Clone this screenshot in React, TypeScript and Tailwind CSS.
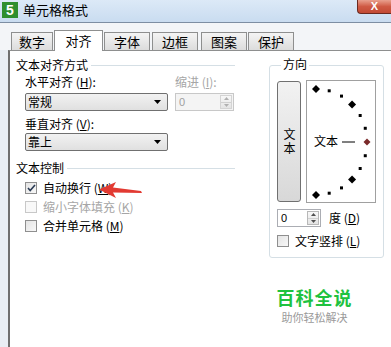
import React from "react";

const font = { fontFamily: '"Noto Sans CJK SC", "Liberation Sans", sans-serif' };

function Tab({ label, active, w, ml }: { label: string; active?: boolean; w: string; ml: string }) {
  if (active) {
    return (
      <div className={`${w} ${ml} h-[21px] -mb-px z-10 flex items-center justify-center border border-b-0 border-[#8e8f8f] bg-white text-[13px] text-black`}>
        {label}
      </div>
    );
  }
  return (
    <div className={`${w} ${ml} h-[18px] flex items-center justify-center border border-b-0 border-[#8e8f8f] bg-gradient-to-b from-[#f4f4f4] to-[#dcdcdc] text-[13px] text-black`}>
      {label}
    </div>
  );
}

function GroupTitle({ text }: { text: string }) {
  return (
    <div className="flex items-center h-[14px]">
      <span className="text-[12px] leading-none text-black">{text}</span>
      <div className="flex-1 ml-[3px] h-px bg-[#d5dfe5]" />
    </div>
  );
}

function Select({ value }: { value: string }) {
  return (
    <div className="w-[143px] h-[18px] flex items-center justify-between rounded-[2px] border border-[#707070] bg-gradient-to-b from-[#f2f2f2] to-[#e0e0e0] pl-[2px] pr-[6px]">
      <span className="text-[12px] leading-none text-black">{value}</span>
      <svg width="7" height="4" viewBox="0 0 7 4">
        <path d="M0 0h7L3.5 4z" fill="#000" />
      </svg>
    </div>
  );
}

function Spin({ disabled, w }: { disabled?: boolean; w: string }) {
  return (
    <div className={`${w} h-[18px] flex items-center justify-between border ${disabled ? "border-[#c8c8c8] bg-[#f4f4f4]" : "border-[#abadb3] bg-white"} pl-[3px] pr-px`}>
      <span className={`text-[11px] leading-none ${disabled ? "text-[#a0a0a0]" : "text-black"}`} style={{ fontFamily: '"Liberation Sans", sans-serif' }}>0</span>
      <div className={`w-[12px] h-[14px] flex flex-col border ${disabled ? "border-[#d4d4d4]" : "border-[#b8b8b8]"} bg-gradient-to-b from-[#f8f8f8] to-[#e4e4e4]`}>
        <div className="flex-1 flex items-center justify-center border-b border-[#d0d0d0]">
          <svg width="5" height="3" viewBox="0 0 5 3"><path d="M2.5 0L5 3H0z" fill={disabled ? "#b0b0b0" : "#505050"} /></svg>
        </div>
        <div className="flex-1 flex items-center justify-center">
          <svg width="5" height="3" viewBox="0 0 5 3"><path d="M0 0h5L2.5 3z" fill={disabled ? "#b0b0b0" : "#505050"} /></svg>
        </div>
      </div>
    </div>
  );
}

function Check({ checked, disabled, label, hot }: { checked?: boolean; disabled?: boolean; label: string; hot: string }) {
  return (
    <div className="flex items-center h-[19px]">
      <div className={`w-[12px] h-[12px] flex items-center justify-center border ${disabled ? "border-[#c8c8c8] bg-[#f8f8f8]" : "border-[#8f8f8f] bg-gradient-to-br from-[#e4e4e4] to-[#f8f8f8]"}`}>
        {checked && (
          <svg width="9" height="8" viewBox="0 0 9 8">
            <path d="M1 4l2.2 2.5L8 1" stroke="#2a3b55" strokeWidth="1.6" fill="none" />
          </svg>
        )}
      </div>
      <span className={`ml-[6px] text-[12px] leading-none ${disabled ? "text-[#a6a6a6]" : "text-black"}`}>
        {label} (<u>{hot}</u>)
      </span>
    </div>
  );
}

function Dial() {
  const pts = [90, 75, 60, 45, 30, 15, 0, -15, -30, -45, -60, -75, -90];
  const cx = 9;
  const cy = 61;
  return (
    <div className="relative w-[70px] h-[123px] border border-[#a0a0a0] bg-white">
      <svg className="absolute inset-0" width="68" height="121" viewBox="0 0 68 121">
        {pts.map((a) => {
          const r = (a * Math.PI) / 180;
          const x = cx + 51 * Math.cos(r);
          const y = cy - 53 * Math.sin(r);
          if (a === 0) return <path key={a} d={`M${x} ${y - 3.5}l3.5 3.5l-3.5 3.5l-3.5-3.5z`} fill="#7a2a2a" />;
          if (Math.abs(a) === 90 || Math.abs(a) === 45)
            return <path key={a} d={`M${x} ${y - 4}l4 4l-4 4l-4-4z`} fill="#000" />;
          return <rect key={a} x={x - 1.5} y={y - 1.5} width="3" height="3" fill="#000" />;
        })}
        <line x1="35" y1="61" x2="48" y2="61" stroke="#000" strokeWidth="1" />
      </svg>
      <span className="absolute left-[7px] top-[54px] text-[12px] leading-none text-black">文本</span>
    </div>
  );
}

export default function App() {
  return (
    <div className="w-[391px] h-[347px] overflow-hidden bg-white flex flex-col relative" style={font}>
      {/* title bar */}
      <div className="h-[23px] flex items-start bg-gradient-to-b from-[#dce9f7] to-[#c9dcf0] border-b border-[#7d8ea3]">
        <div className="mt-[2px] ml-[2px] w-[16px] h-[16px] bg-[#2f8f2f] flex items-center justify-center text-white text-[14px] font-bold leading-none" style={{ fontFamily: '"Liberation Sans", sans-serif' }}>
          5
        </div>
        <span className="ml-[5px] mt-[3px] text-[13px] leading-none text-black">单元格格式</span>
        <div className="ml-auto w-[34px] h-[14px] rounded-bl-[4px] border border-t-0 border-r-0 border-[#6b2a20] bg-gradient-to-b from-[#e8a08e] via-[#cf5a44] to-[#c24a34] flex items-center justify-center text-white text-[11px] font-bold leading-none" style={{ fontFamily: '"Liberation Sans", sans-serif' }}>
          X
        </div>
      </div>

      <div className="flex-1 flex flex-col bg-[#f3f5f8]">
        {/* tabs */}
        <div className="mt-[9px] h-[18px] flex items-end">
          <Tab label="数字" w="w-[42px]" ml="ml-[11px]" />
          <Tab label="对齐" active w="w-[49px]" ml="ml-[1px]" />
          <Tab label="字体" w="w-[46px]" ml="ml-[1px]" />
          <Tab label="边框" w="w-[46px]" ml="ml-[2px]" />
          <Tab label="图案" w="w-[46px]" ml="ml-[3px]" />
          <Tab label="保护" w="w-[46px]" ml="ml-[1px]" />
        </div>

        <div className="flex-1 flex">
          <div className="w-[8px] bg-[#e9eef4]" />
          <div className="flex-1 flex bg-white border-l-2 border-t border-l-[#6f6f6f] border-t-[#8e8f8f] pt-[7px]">
            {/* left column */}
            <div className="ml-[6px] w-[219px] flex flex-col">
              <GroupTitle text="文本对齐方式" />
              <div className="ml-[9px] mt-[4px] flex">
                <div className="flex flex-col">
                  <span className="h-[14px] text-[12px] leading-none text-black">水平对齐 (<u>H</u>):</span>
                  <div className="mt-[3px]"><Select value="常规" /></div>
                </div>
                <div className="ml-[7px] flex flex-col">
                  <span className="h-[14px] text-[12px] leading-none text-[#a6a6a6]">缩进 (<u>I</u>):</span>
                  <div className="mt-[3px]"><Spin disabled w="w-[59px]" /></div>
                </div>
              </div>
              <div className="ml-[9px] mt-[7px] flex flex-col">
                <span className="h-[14px] text-[12px] leading-none text-black">垂直对齐 (<u>V</u>):</span>
                <div className="mt-[1px]"><Select value="靠上" /></div>
              </div>
              <div className="mt-[10px]"><GroupTitle text="文本控制" /></div>
              <div className="ml-[9px] mt-[3px] flex flex-col">
                <Check checked label="自动换行" hot="W" />
                <Check disabled label="缩小字体填充" hot="K" />
                <Check label="合并单元格" hot="M" />
              </div>
            </div>

            {/* right column */}
            <div className="ml-[34px] w-[115px] flex flex-col">
              <div className="mt-[7px] h-[193px] rounded-[3px] border border-[#d5dfe5] relative flex flex-col px-[7px] pt-[14px]">
                <span className="absolute -top-[8px] left-[11px] px-[2px] bg-white text-[12px] leading-none text-black">方向</span>
                <div className="flex">
                  <div className="w-[25px] h-[121px] mt-px rounded-[3px] border border-[#707070] bg-gradient-to-b from-[#f2f2f2] to-[#d8d8d8] flex items-center justify-center">
                    <span className="[writing-mode:vertical-rl] [text-orientation:upright] text-[12px] leading-none tracking-[2px] text-black">文本</span>
                  </div>
                  <div className="ml-[5px]"><Dial /></div>
                </div>
                <div className="mt-[6px] flex items-center">
                  <Spin w="w-[44px]" />
                  <span className="ml-[8px] text-[12px] leading-none text-black">度 (<u>D</u>)</span>
                </div>
                <div className="mt-[4px]">
                  <Check label="文字竖排" hot="L" />
                </div>
              </div>
              <div className="mt-[30px] mr-[24px] flex flex-col items-center">
                <span className="text-[18px] leading-none font-bold text-[#1fc23f] tracking-[1px]">百科全说</span>
                <span className="mt-[6px] text-[11px] leading-none text-[#9a9a9a]">助你轻松解决</span>
              </div>
            </div>
          </div>
        </div>
      </div>

      {/* red arrow annotation */}
      <svg className="absolute left-[99px] top-[181px]" width="44" height="18" viewBox="0 0 44 18">
        <path d="M0 8.5L17 1L14 6.5L42 10L43 12L14 11.5L17 17z" fill="#e23a32" />
      </svg>
    </div>
  );
}
